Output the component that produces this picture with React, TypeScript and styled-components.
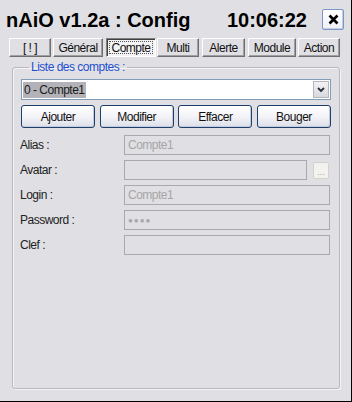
import React from "react";
import styled, { createGlobalStyle } from "styled-components";

const GlobalStyle = createGlobalStyle`
  html, body {
    margin: 0;
    padding: 0;
    background: #e0dfe3;
  }
  body {
    font-family: "Liberation Sans", Arial, sans-serif;
    font-size: 12px;
    letter-spacing: -0.5px;
    color: #1e1e1e;
  }
`;

const Window = styled.div`
  width: 352px;
  height: 402px;
  box-sizing: border-box;
  background: #e0dfe3;
  border-right: 1px solid #000;
  border-bottom: 1px solid #000;
  display: flex;
  flex-direction: column;
`;

const Header = styled.div`
  display: flex;
  align-items: flex-start;
  height: 38px;
  padding-left: 6px;
`;

const Title = styled.div`
  margin-top: 10px;
  font-size: 20px;
  line-height: 20px;
  font-weight: bold;
  letter-spacing: 0;
  color: #000;
  white-space: nowrap;
`;

const Clock = styled(Title)`
  margin-left: auto;
  margin-right: 15px;
`;

const CloseButton = styled.button`
  margin-top: 9px;
  margin-right: 7px;
  width: 22px;
  height: 21px;
  padding: 0;
  display: flex;
  align-items: center;
  justify-content: center;
  border: 1px solid #7a96c8;
  border-radius: 2px;
  background: linear-gradient(#ffffff, #eef0f6);
  box-shadow: inset -1px -1px 0 #c6cfe0;
`;

const TabBar = styled.div`
  display: flex;
  height: 19px;
`;

const Tab = styled.div<{ $w: number; $ml: number; $active?: boolean }>`
  width: ${(p) => p.$w}px;
  margin-left: ${(p) => p.$ml}px;
  box-sizing: border-box;
  display: flex;
  align-items: center;
  justify-content: center;
  color: #111;
  border-top: 1px solid ${(p) => (p.$active ? "#808080" : "#ffffff")};
  border-left: 1px solid ${(p) => (p.$active ? "#808080" : "#ffffff")};
  border-right: 1px solid ${(p) => (p.$active ? "#ffffff" : "#6f6f6f")};
  border-bottom: 1px solid ${(p) => (p.$active ? "#ffffff" : "#6f6f6f")};
  background: ${(p) => (p.$active ? "#f3f2f5" : "#e0dfe3")};
  box-shadow: ${(p) =>
    p.$active ? "inset 1px 1px 0 #404040" : "inset -1px -1px 0 #a0a0a0"};
  outline: ${(p) => (p.$active ? "1px dotted #555" : "none")};
  outline-offset: -4px;
`;

const Group = styled.fieldset`
  margin: 3px 0 0 12px;
  width: 328px;
  height: 329px;
  box-sizing: border-box;
  padding: 0 8px;
  border: 1px solid #b9b8be;
  border-radius: 3px;
  box-shadow: inset 1px 1px 0 #f4f4f6, 1px 1px 0 #f4f4f6;
  display: flex;
  flex-direction: column;
  min-width: 0;
`;

const Legend = styled.legend`
  margin-left: 8px;
  padding: 0 2px;
  color: #1d4fd0;
  line-height: 14px;
`;

const Combo = styled.div`
  margin-top: 5px;
  height: 21px;
  box-sizing: border-box;
  border: 1px solid #7f9db9;
  background: #fff;
  display: flex;
  align-items: center;
  padding-left: 1px;
  padding-right: 1px;
`;

const Selected = styled.span`
  background: #b3b2b8;
  color: #1a1a1a;
  padding: 1px 1px;
  line-height: 14px;
`;

const DropButton = styled.div`
  margin-left: auto;
  width: 16px;
  height: 17px;
  box-sizing: border-box;
  border: 1px solid #b4b6bd;
  background: linear-gradient(#f2f2f4, #d8d9df);
  display: flex;
  align-items: center;
  justify-content: center;
`;

const ButtonRow = styled.div`
  margin-top: 5px;
  display: flex;
  justify-content: space-between;
`;

const Button = styled.button`
  width: 74px;
  height: 23px;
  padding: 0;
  font-family: "Liberation Sans", Arial, sans-serif;
  font-size: 12px;
  letter-spacing: -0.5px;
  color: #111;
  border: 1px solid #1c3f6e;
  border-radius: 3px;
  background: linear-gradient(#ffffff 0%, #f4f4f8 50%, #dcdfe8 100%);
  box-shadow: inset -1px -1px 0 #c5cbdb;
`;

const Form = styled.div`
  margin-top: 7px;
  display: flex;
  flex-direction: column;
  gap: 5px;
`;

const Row = styled.div`
  display: flex;
  align-items: center;
  height: 20px;
`;

const Label = styled.label`
  width: 104px;
  margin-left: -1px;
  color: #222;
`;

const Field = styled.div<{ $w?: number }>`
  width: ${(p) => p.$w ?? 206}px;
  height: 20px;
  box-sizing: border-box;
  border: 1px solid #a9a8ad;
  background: #e0dfe3;
  color: #a6a6a6;
  display: flex;
  align-items: center;
  padding-left: 3px;
`;

const Dots = styled.span`
  font-size: 8px;
  letter-spacing: 1px;
  color: #a8a8ac;
`;

const BrowseButton = styled.div`
  margin-left: 6px;
  width: 16px;
  height: 17px;
  box-sizing: border-box;
  border: 1px solid #d3d2cb;
  border-radius: 2px;
  background: #f3f2ee;
  color: #a0a0a0;
  font-size: 9px;
  letter-spacing: 0;
  display: flex;
  align-items: flex-end;
  justify-content: center;
  line-height: 12px;
`;

const tabs = [
  { label: "[ ! ]", w: 42, ml: 9 },
  { label: "Général", w: 50, ml: 2 },
  { label: "Compte", w: 50, ml: 3, active: true },
  { label: "Multi", w: 42, ml: 1 },
  { label: "Alerte", w: 43, ml: 3 },
  { label: "Module", w: 48, ml: 3 },
  { label: "Action", w: 42, ml: 2 },
];

export default function App() {
  return (
    <>
      <GlobalStyle />
      <Window>
        <Header>
          <Title>nAiO v1.2a : Config</Title>
          <Clock>10:06:22</Clock>
          <CloseButton>
            <svg width="11" height="11" viewBox="0 0 11 11">
              <path d="M1.5 1.5 L9.5 9.5 M9.5 1.5 L1.5 9.5" stroke="#000" strokeWidth="2.6" />
            </svg>
          </CloseButton>
        </Header>
        <TabBar>
          {tabs.map((t) => (
            <Tab key={t.label} $w={t.w} $ml={t.ml} $active={t.active}>
              {t.label}
            </Tab>
          ))}
        </TabBar>
        <Group>
          <Legend>Liste des comptes :</Legend>
          <Combo>
            <Selected>0 - Compte1</Selected>
            <DropButton>
              <svg width="8" height="6" viewBox="0 0 8 6">
                <path d="M1 1 L4 4 L7 1" stroke="#2c2c3a" strokeWidth="1.8" fill="none" />
              </svg>
            </DropButton>
          </Combo>
          <ButtonRow>
            <Button>Ajouter</Button>
            <Button>Modifier</Button>
            <Button>Effacer</Button>
            <Button>Bouger</Button>
          </ButtonRow>
          <Form>
            <Row>
              <Label>Alias :</Label>
              <Field>Compte1</Field>
            </Row>
            <Row>
              <Label>Avatar :</Label>
              <Field $w={183} />
              <BrowseButton>...</BrowseButton>
            </Row>
            <Row>
              <Label>Login :</Label>
              <Field>Compte1</Field>
            </Row>
            <Row>
              <Label>Password :</Label>
              <Field>
                <Dots>●●●●</Dots>
              </Field>
            </Row>
            <Row>
              <Label>Clef :</Label>
              <Field />
            </Row>
          </Form>
        </Group>
      </Window>
    </>
  );
}
